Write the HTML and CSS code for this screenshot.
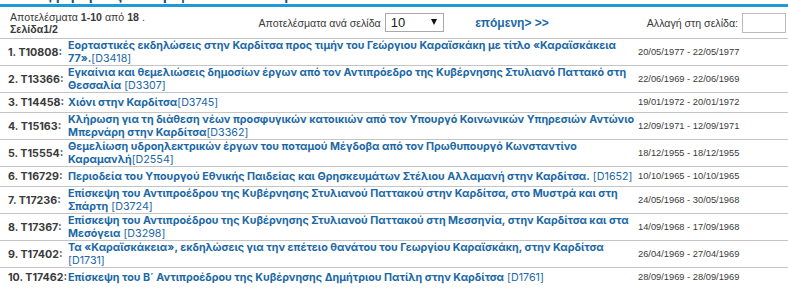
FILE: index.html
```html
<!DOCTYPE html>
<html>
	<head>
		<meta charset="UTF-8">
		<title>Αποτελέσματα αναζήτησης</title>
		<link rel="stylesheet" href="styles.css">
	</head>
	<body>
		<div class="results">
			<h3 class="results-title">Η αναζήτησή σας επιστρέφει τα αποτελέσματα:</h3>
			<div class="results-bar">
				<div class="results-count">Αποτελέσματα <b>1-10</b> από <b>18</b> .<br><b>Σελίδα1/2</b></div>
				<div class="per-page">
					Αποτελέσματα ανά σελίδα
					<span class="select-wrap">
						<select>
							<option>10</option>
							<option>20</option>
							<option>50</option>
						</select>
					</span>
				</div>
				<div class="pager"><a href="#">επόμενη&gt; &gt;&gt;</a></div>
				<div class="goto">Αλλαγή στη σελίδα: <input type="text" value=""></div>
			</div>
			<table class="results-list">
				<colgroup>
					<col class="col-num">
					<col class="col-title">
					<col class="col-date">
				</colgroup>
				<tr>
					<td class="num">1. T10808:</td>
					<td class="title"><a href="#"><b>Εορταστικές εκδηλώσεις στην Καρδίτσα προς τιμήν του Γεώργιου Καραϊσκάκη με τίτλο «Καραϊσκάκεια 77».</b>[D3418]</a></td>
					<td class="date">20/05/1977 - 22/05/1977</td>
				</tr>
				<tr>
					<td class="num">2. T13366:</td>
					<td class="title"><a href="#"><b>Εγκαίνια και θεμελιώσεις δημοσίων έργων από τον Αντιπρόεδρο της Κυβέρνησης Στυλιανό Παττακό στη Θεσσαλία</b> [D3307]</a></td>
					<td class="date">22/06/1969 - 22/06/1969</td>
				</tr>
				<tr>
					<td class="num">3. T14458:</td>
					<td class="title"><a href="#"><b>Χιόνι στην Καρδίτσα</b>[D3745]</a></td>
					<td class="date">19/01/1972 - 20/01/1972</td>
				</tr>
				<tr>
					<td class="num">4. T15163:</td>
					<td class="title"><a href="#"><b>Κλήρωση για τη διάθεση νέων προσφυγικών κατοικιών από τον Υπουργό Κοινωνικών Υπηρεσιών Αντώνιο Μπερνάρη στην Καρδίτσα</b>[D3362]</a></td>
					<td class="date">12/09/1971 - 12/09/1971</td>
				</tr>
				<tr>
					<td class="num">5. T15554:</td>
					<td class="title"><a href="#"><b>Θεμελίωση υδροηλεκτρικών έργων του ποταμού Μέγδοβα από τον Πρωθυπουργό Κωνσταντίνο Καραμανλή</b>[D2554]</a></td>
					<td class="date">18/12/1955 - 18/12/1955</td>
				</tr>
				<tr>
					<td class="num">6. T16729:</td>
					<td class="title"><a href="#"><b>Περιοδεία του Υπουργού Εθνικής Παιδείας και Θρησκευμάτων Στέλιου Αλλαμανή στην Καρδίτσα.</b> [D1652]</a></td>
					<td class="date">10/10/1965 - 10/10/1965</td>
				</tr>
				<tr>
					<td class="num">7. T17236:</td>
					<td class="title"><a href="#"><b>Επίσκεψη του Αντιπροέδρου της Κυβέρνησης Στυλιανού Παττακού στην Καρδίτσα, στο Μυστρά και στη Σπάρτη</b> [D3724]</a></td>
					<td class="date">24/05/1968 - 30/05/1968</td>
				</tr>
				<tr>
					<td class="num">8. T17367:</td>
					<td class="title"><a href="#"><b>Επίσκεψη του Αντιπροέδρου της Κυβέρνησης Στυλιανού Παττακού στη Μεσσηνία, στην Καρδίτσα και στα Μεσόγεια</b> [D3298]</a></td>
					<td class="date">14/09/1968 - 17/09/1968</td>
				</tr>
				<tr>
					<td class="num">9. T17402:</td>
					<td class="title"><a href="#"><b>Τα «Καραϊσκάκεια», εκδηλώσεις για την επέτειο θανάτου του Γεωργίου Καραϊσκάκη, στην Καρδίτσα</b> [D1731]</a></td>
					<td class="date">26/04/1969 - 27/04/1969</td>
				</tr>
				<tr class="last">
					<td class="num">10. T17462:</td>
					<td class="title"><a href="#"><b>Επίσκεψη του Β΄ Αντιπροέδρου της Κυβέρνησης Δημήτριου Πατίλη στην Καρδίτσα</b> [D1761]</a></td>
					<td class="date">28/09/1969 - 28/09/1969</td>
				</tr>
			</table>
		</div>
	</body>
</html>
```

FILE: styles.css
```css
body{
	margin:0;
	background:#fff;
	font-family:"Liberation Sans", Arial, sans-serif;
	color:#333;
}
a{
	color:#1b68a6;
	text-decoration:none;
}
.results-title{
	margin:-13px 0 0 0;
	padding:0 0 0 6px;
	font-size:14px;
	line-height:17px;
	font-weight:bold;
	color:#1b4f7c;
	white-space:nowrap;
	border-bottom:3px solid #1d9bd6;
}
.results-bar{
	display:flex;
	align-items:center;
	height:31px;
	border-bottom:1px solid #c4c4c4;
	font-size:10.6px;
	color:#3a3a3a;
	white-space:nowrap;
}
.results-count{
	width:259px;
	box-sizing:border-box;
	padding:1px 0 0 10px;
	line-height:12px;
}
.per-page{
	width:217px;
	display:flex;
	align-items:center;
	gap:4px;
}
.select-wrap{
	position:relative;
	display:inline-block;
}
.select-wrap select{
	appearance:none;
	-webkit-appearance:none;
	width:59px;
	height:19px;
	margin:0;
	padding:0 0 0 5px;
	border:1px solid #a9a9a9;
	border-radius:0;
	background:#fff;
	font-family:"Liberation Sans", Arial, sans-serif;
	font-size:13px;
	color:#222;
}
.select-wrap::after{
	content:"";
	position:absolute;
	right:7px;
	top:6px;
	border-left:3px solid transparent;
	border-right:3px solid transparent;
	border-top:6px solid #111;
	pointer-events:none;
}
.pager{
	width:172px;
	font-size:12px;
	font-weight:bold;
}
.goto{
	flex:1;
	display:flex;
	align-items:center;
	justify-content:flex-end;
	gap:4px;
	padding-right:2px;
}
.goto input{
	width:44px;
	height:20px;
	box-sizing:border-box;
	margin:0;
	border:1px solid #bbb;
}
.results-list{
	width:100%;
	table-layout:fixed;
	border-collapse:collapse;
}
.col-num{
	width:68px;
}
.col-title{
	width:570px;
}
.results-list td{
	padding:0;
	vertical-align:middle;
	border-bottom:1px solid #c4c4c4;
}
.results-list tr.last td{
	border-bottom:none;
}
.results-list td.num{
	padding-left:8px;
	font-family:Inter, "Liberation Sans", sans-serif;
	font-size:10.7px;
	font-weight:bold;
	white-space:nowrap;
	color:#3a3a3a;
}
.results-list td.title{
	font-family:Inter, "Liberation Sans", sans-serif;
	font-size:10.72px;
	line-height:13px;
}
.results-list td.date{
	padding:3px 0;
	font-size:9.3px;
	line-height:13px;
	white-space:nowrap;
	color:#3a3a3a;
}
```
